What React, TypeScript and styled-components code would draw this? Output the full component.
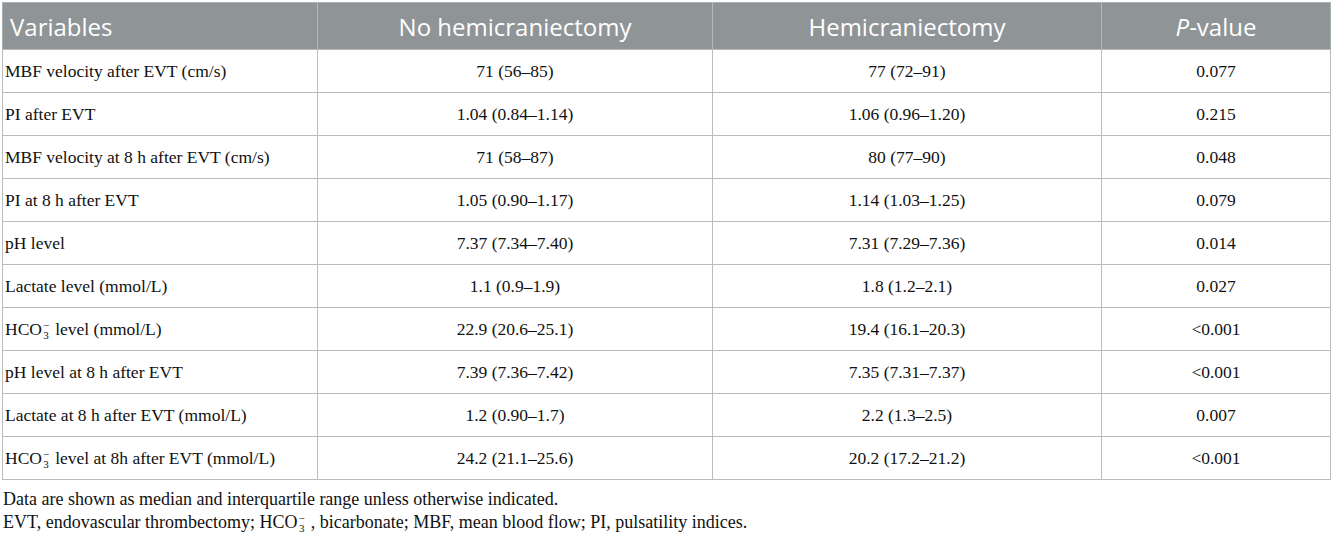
import styled, { createGlobalStyle } from 'styled-components';

const GlobalStyle = createGlobalStyle`
  html, body {
    margin: 0;
    padding: 0;
    background: #ffffff;
  }
`;

const Page = styled.div`
  padding: 2px 3px 0 2px;
  width: 1328px;
`;

const Table = styled.table`
  width: 1328px;
  border-collapse: collapse;
  table-layout: fixed;
  border: 1px solid #a7b1ae;
`;

const HeadCell = styled.th<{ $align?: 'left' | 'center' }>`
  background: #8f9496;
  color: #ffffff;
  font-family: "Open Sans", "Liberation Sans", sans-serif;
  font-weight: 400;
  font-size: 24px;
  height: 46px;
  padding: 0 7px;
  text-align: ${(p) => p.$align || 'center'};
  border-left: 1px solid #b4b8b8;
  border-bottom: 1px solid #b4b8b8;
  vertical-align: middle;
  &:first-child {
    border-left: none;
  }
`;

const Cell = styled.td<{ $align?: 'left' | 'center' }>`
  font-family: "Liberation Serif", "DejaVu Serif", serif;
  font-size: 17.5px;
  line-height: 20px;
  color: #111111;
  height: 42px;
  padding: 0 2px;
  text-align: ${(p) => p.$align || 'center'};
  border: 1px solid #b9bcbc;
  vertical-align: middle;
`;

const Chem = styled.span`
  white-space: nowrap;
`;

const Stack = styled.span`
  display: inline-flex;
  flex-direction: column;
  align-items: center;
  vertical-align: 6px;
  font-size: 11px;
  line-height: 10px;
  height: 20px;
  margin: 0 6px 0 1px;
`;

const Footer = styled.div`
  font-family: "Liberation Serif", "DejaVu Serif", serif;
  font-size: 18px;
  color: #111111;
  line-height: 23px;
  padding: 8px 0 0 1px;
`;

const Hco3 = () => (
  <Chem>
    HCO<Stack><span>−</span><span>3</span></Stack>
  </Chem>
);

type Row = { label: React.ReactNode; no: string; yes: string; p: string };

const rows: Row[] = [
  { label: 'MBF velocity after EVT (cm/s)', no: '71 (56–85)', yes: '77 (72–91)', p: '0.077' },
  { label: 'PI after EVT', no: '1.04 (0.84–1.14)', yes: '1.06 (0.96–1.20)', p: '0.215' },
  { label: 'MBF velocity at 8 h after EVT (cm/s)', no: '71 (58–87)', yes: '80 (77–90)', p: '0.048' },
  { label: 'PI at 8 h after EVT', no: '1.05 (0.90–1.17)', yes: '1.14 (1.03–1.25)', p: '0.079' },
  { label: 'pH level', no: '7.37 (7.34–7.40)', yes: '7.31 (7.29–7.36)', p: '0.014' },
  { label: 'Lactate level (mmol/L)', no: '1.1 (0.9–1.9)', yes: '1.8 (1.2–2.1)', p: '0.027' },
  { label: <><Hco3 />level (mmol/L)</>, no: '22.9 (20.6–25.1)', yes: '19.4 (16.1–20.3)', p: '<0.001' },
  { label: 'pH level at 8 h after EVT', no: '7.39 (7.36–7.42)', yes: '7.35 (7.31–7.37)', p: '<0.001' },
  { label: 'Lactate at 8 h after EVT (mmol/L)', no: '1.2 (0.90–1.7)', yes: '2.2 (1.3–2.5)', p: '0.007' },
  { label: <><Hco3 />level at 8h after EVT (mmol/L)</>, no: '24.2 (21.1–25.6)', yes: '20.2 (17.2–21.2)', p: '<0.001' },
];

export default function App() {
  return (
    <Page>
      <GlobalStyle />
      <Table>
        <colgroup>
          <col style={{ width: 315 }} />
          <col style={{ width: 395 }} />
          <col style={{ width: 389 }} />
          <col style={{ width: 229 }} />
        </colgroup>
        <thead>
          <tr>
            <HeadCell $align="left">Variables</HeadCell>
            <HeadCell>No hemicraniectomy</HeadCell>
            <HeadCell>Hemicraniectomy</HeadCell>
            <HeadCell><i>P</i>-value</HeadCell>
          </tr>
        </thead>
        <tbody>
          {rows.map((r, i) => (
            <tr key={i}>
              <Cell $align="left">{r.label}</Cell>
              <Cell>{r.no}</Cell>
              <Cell>{r.yes}</Cell>
              <Cell>{r.p}</Cell>
            </tr>
          ))}
        </tbody>
      </Table>
      <Footer>
        <div>Data are shown as median and interquartile range unless otherwise indicated.</div>
        <div>EVT, endovascular thrombectomy; <Hco3 />, bicarbonate; MBF, mean blood flow; PI, pulsatility indices.</div>
      </Footer>
    </Page>
  );
}
